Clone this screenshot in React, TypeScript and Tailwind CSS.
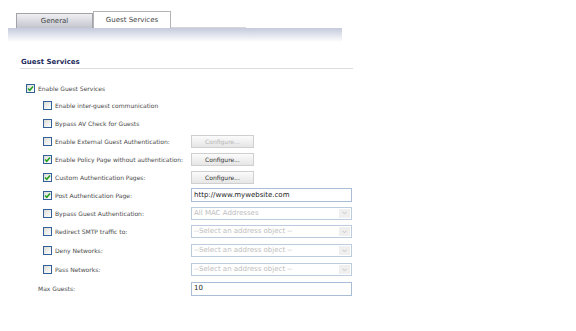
import React from 'react'

const Check = ({ checked }: { checked?: boolean }) => (
  <span className="w-[9px] h-[9px] shrink-0 border border-[#34609a] bg-gradient-to-br from-[#dcdcd6] to-white flex items-center justify-center">
    {checked && (
      <svg width="7" height="7" viewBox="0 0 7 7">
        <path d="M1 3.5 L2.8 5.3 L6 1.5" stroke="#22a022" strokeWidth="1.5" fill="none" />
      </svg>
    )}
  </span>
)

const ConfigureBtn = ({ disabled }: { disabled?: boolean }) => (
  <div
    className={`w-[63px] h-[13px] border border-[#cfcfcf] bg-gradient-to-b from-[#fbfbfb] to-[#e6e6e6] flex items-center justify-center text-[6px] ${
      disabled ? 'text-[#b4b4b4]' : 'text-[#333]'
    }`}
  >
    Configure...
  </div>
)

const TextBox = ({ value }: { value: string }) => (
  <div className="w-[161px] h-[14px] border border-[#a9bdd6] bg-white flex items-center px-[2px] text-[7px] text-[#222]">
    {value}
  </div>
)

const SelectBox = ({ value }: { value: string }) => (
  <div className="w-[161px] h-[13px] border border-[#bccbdd] bg-white flex items-center pl-[2px] pr-[1px] text-[7px] text-[#bdbdbd]">
    <span className="flex-1">{value}</span>
    <span className="w-[11px] h-[9px] bg-[#efefef] flex items-center justify-center">
      <svg width="5" height="4" viewBox="0 0 5 4">
        <path d="M0.5 0.8 L2.5 2.8 L4.5 0.8" stroke="#c4c4c4" strokeWidth="1" fill="none" />
      </svg>
    </span>
  </div>
)

type Row = {
  label: string
  checked?: boolean
  control?: React.ReactNode
  h: string
}

const rows: Row[] = [
  { label: 'Enable inter-guest communication', h: 'h-[17px]' },
  { label: 'Bypass AV Check for Guests', h: 'h-[18px]' },
  { label: 'Enable External Guest Authentication:', h: 'h-[18px]', control: <ConfigureBtn disabled /> },
  { label: 'Enable Policy Page without authentication:', checked: true, h: 'h-[18px]', control: <ConfigureBtn /> },
  { label: 'Custom Authentication Pages:', checked: true, h: 'h-[18px]', control: <ConfigureBtn /> },
  { label: 'Post Authentication Page:', checked: true, h: 'h-[18px]', control: <TextBox value="http://www.mywebsite.com" /> },
  { label: 'Bypass Guest Authentication:', h: 'h-[18px]', control: <SelectBox value="All MAC Addresses" /> },
  { label: 'Redirect SMTP traffic to:', h: 'h-[19px]', control: <SelectBox value="--Select an address object --" /> },
  { label: 'Deny Networks:', h: 'h-[19px]', control: <SelectBox value="--Select an address object --" /> },
  { label: 'Pass Networks:', h: 'h-[19px]', control: <SelectBox value="--Select an address object --" /> },
]

export default function App() {
  return (
    <div className="w-[576px] h-[331px] bg-white overflow-hidden font-['DejaVu_Sans',sans-serif] text-[#4a4a4a]">
      {/* Tabs */}
      <div className="h-[28px] pl-[16px] flex items-end">
        <div className="w-[77px] h-[15px] border border-b-0 border-[#a2a2a8] bg-gradient-to-b from-[#f0f0f3] to-[#c3c5ce] flex items-center justify-center text-[7px] text-[#444]">
          General
        </div>
        <div className="w-[78px] h-[17px] border border-b-0 border-[#b4b4b8] bg-white flex items-center justify-center text-[7px] text-[#444]">
          Guest Services
        </div>
        <div className="w-[75px] h-[1px] bg-[#d4d6dc]" />
      </div>
      <div className="ml-[8px] w-[334px] h-[14px] bg-gradient-to-b from-[#c4cadb] to-white" />

      {/* Section heading */}
      <div className="mt-[15px] ml-[20px] w-[333px] h-[12px] border-b border-[#dcdcdc] pl-[1px] text-[7px] font-bold text-[#1e2d5c] leading-[10px]">
        Guest Services
      </div>

      {/* Form */}
      <div className="mt-[11px] ml-[26px]">
        <div className="h-[17px] flex items-center gap-[3px] text-[6px]">
          <Check checked />
          <span>Enable Guest Services</span>
        </div>
        {rows.map((r) => (
          <div key={r.label} className={`${r.h} flex items-center text-[6px]`}>
            <div className="w-[165px] pl-[17px] flex items-center gap-[3px]">
              <Check checked={r.checked} />
              <span className="whitespace-nowrap">{r.label}</span>
            </div>
            {r.control}
          </div>
        ))}
        <div className="h-[19px] flex items-center text-[6px]">
          <div className="w-[165px] pl-[12px]">Max Guests:</div>
          <TextBox value="10" />
        </div>
      </div>
    </div>
  )
}
